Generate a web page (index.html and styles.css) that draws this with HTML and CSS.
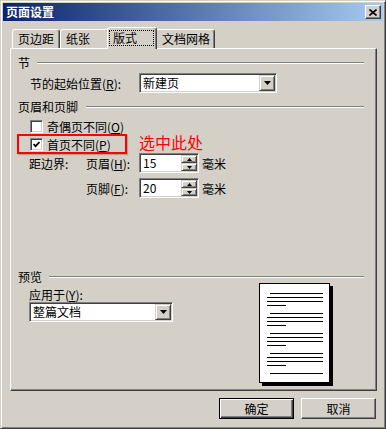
FILE: index.html
```html
<!DOCTYPE html>
<html lang="zh-CN">
<head>
<meta charset="utf-8">
<title>页面设置</title>
<link rel="stylesheet" href="styles.css">
</head>
<body>
<div class="window">
  <div class="titlebar">
    <span class="title">页面设置</span>
    <span class="close"><svg width="8" height="7" viewBox="0 0 8 7"><path d="M0.5 0.5 L7.5 6.5 M7.5 0.5 L0.5 6.5" stroke="#000" stroke-width="1.6" fill="none"/></svg></span>
  </div>
  <div class="tabs">
    <div class="tab t1">页边距</div>
    <div class="tab t2">纸张</div>
    <div class="tab active"><span class="focus">版式</span></div>
    <div class="tab t4">文档网格</div>
  </div>
  <div class="panel">
    <div class="group g1"><span>节</span><i class="rule"></i></div>
    <div class="row start">
      <span class="lbl">节的起始位置(<u>R</u>):</span>
      <div class="combo c1"><span class="val">新建页</span><span class="dd"><svg width="7" height="4" viewBox="0 0 7 4"><polygon points="0,0 7,0 3.5,4" fill="#000"/></svg></span></div>
    </div>
    <div class="group g2"><span>页眉和页脚</span><i class="rule"></i></div>
    <div class="row chk1"><span class="cb"></span><span>奇偶页不同(<u>O</u>)</span></div>
    <div class="row chk2">
      <div class="mark"><span class="cb"><svg width="7" height="7" viewBox="0 0 7 7"><polyline points="0.5,3 2.6,5.2 6.5,1" stroke="#000" stroke-width="1.7" fill="none"/></svg></span><span>首页不同(<u>P</u>)</span></div>
      <span class="note">选中此处</span>
    </div>
    <div class="row spinrow s1">
      <span class="l1">距边界:</span>
      <span class="l2">页眉(<u>H</u>):</span>
      <div class="spin"><span class="val">15</span><span class="btns"><span class="sb"><svg width="5" height="3" viewBox="0 0 5 3"><polygon points="2.5,0 5,3 0,3" fill="#000"/></svg></span><span class="sb"><svg width="5" height="3" viewBox="0 0 5 3"><polygon points="0,0 5,0 2.5,3" fill="#000"/></svg></span></span></div>
      <span class="unit">毫米</span>
    </div>
    <div class="row spinrow s2">
      <span class="l1"></span>
      <span class="l2">页脚(<u>F</u>):</span>
      <div class="spin"><span class="val">20</span><span class="btns"><span class="sb"><svg width="5" height="3" viewBox="0 0 5 3"><polygon points="2.5,0 5,3 0,3" fill="#000"/></svg></span><span class="sb"><svg width="5" height="3" viewBox="0 0 5 3"><polygon points="0,0 5,0 2.5,3" fill="#000"/></svg></span></span></div>
      <span class="unit">毫米</span>
    </div>
    <div class="group g3"><span>预览</span><i class="rule"></i></div>
    <div class="preview">
      <div class="apply">
        <span class="alabel">应用于(<u>Y</u>):</span>
        <div class="combo c2"><span class="val">整篇文档</span><span class="dd"><svg width="7" height="4" viewBox="0 0 7 4"><polygon points="0,0 7,0 3.5,4" fill="#000"/></svg></span></div>
      </div>
      <div class="paper">
        <i class="ln ind first"></i><i class="ln"></i><i class="ln"></i><i class="ln short"></i>
        <i class="ln ind gap"></i><i class="ln"></i><i class="ln"></i><i class="ln short"></i>
        <i class="ln ind gap"></i><i class="ln"></i><i class="ln"></i><i class="ln short"></i>
        <i class="ln ind gap"></i><i class="ln"></i><i class="ln"></i><i class="ln short"></i>
        <i class="ln ind gap"></i>
      </div>
    </div>
  </div>
  <div class="buttons">
    <button class="btn default">确定</button>
    <button class="btn">取消</button>
  </div>
</div>
</body>
</html>
```

FILE: styles.css
```css
body {
  margin: 0;
  background: #d4d0c8;
  font: 12px "Noto Sans CJK SC", "Noto Sans", sans-serif;
  color: #000;
}
u { text-decoration: underline; }

.window {
  width: 386px;
  height: 429px;
  box-sizing: border-box;
  border: 1px solid;
  border-color: #d4d0c8 #404040 #404040 #d4d0c8;
  box-shadow: inset 1px 1px #fff, inset -1px -1px #808080;
  padding: 2px;
  display: flex;
  flex-direction: column;
  background: #d4d0c8;
}

.titlebar {
  flex: none;
  height: 18px;
  display: flex;
  align-items: center;
  justify-content: space-between;
  padding: 0 2px 0 3px;
  background: linear-gradient(to right, #0a246a, #a6caf0);
  color: #fff;
  font-weight: 700;
}
.title { line-height: 18px; }
.close {
  width: 16px;
  height: 14px;
  box-sizing: border-box;
  background: #d4d0c8;
  border: 1px solid;
  border-color: #fff #404040 #404040 #fff;
  box-shadow: inset -1px -1px #808080;
  display: flex;
  align-items: center;
  justify-content: center;
}

.tabs {
  flex: none;
  display: flex;
  align-items: flex-end;
  height: 21px;
  margin-top: 6px;
  padding-left: 9px;
  position: relative;
  z-index: 1;
}
.tab {
  height: 19px;
  box-sizing: border-box;
  border: 1px solid;
  border-bottom: none;
  border-color: #fff #404040 transparent #fff;
  border-radius: 3px 3px 0 0;
  box-shadow: inset -1px 0 #808080;
  background: #d4d0c8;
  display: flex;
  align-items: center;
  padding-left: 5px;
  line-height: 14px;
}
.t1 { width: 48px; }
.t2 { width: 49px; }
.t4 { width: 60px; padding-left: 6px; }
.tab.active {
  width: 50px;
  height: 22px;
  margin: 0 -2px -1px;
  padding-left: 1px;
  align-items: flex-start;
  position: relative;
  z-index: 2;
}
.focus {
  margin-top: 2px;
  width: 45px;
  height: 16px;
  box-sizing: border-box;
  outline: 1px dotted #000;
  outline-offset: -1px;
  display: flex;
  align-items: center;
  padding-left: 4px;
}

.panel {
  flex: none;
  margin-left: 7px;
  width: 367px;
  height: 343px;
  box-sizing: border-box;
  border: 1px solid;
  border-color: #fff #404040 #404040 #fff;
  box-shadow: inset -1px -1px #808080;
  display: flex;
  flex-direction: column;
  padding: 0 12px 0 7px;
}

.group {
  display: flex;
  align-items: center;
  height: 14px;
  line-height: 14px;
  gap: 7px;
}
.rule {
  flex: 1;
  height: 0;
  border-top: 1px solid #808080;
  border-bottom: 1px solid #fff;
}
.g1 { margin-top: 7px; }
.g2 { margin-top: 7px; gap: 8px; }
.g3 { margin-top: 72px; }

.row {
  display: flex;
  align-items: center;
}
.start { margin-top: 3px; padding-left: 12px; height: 20px; }
.lbl { width: 109px; }

.combo {
  display: flex;
  align-items: center;
  height: 20px;
  box-sizing: border-box;
  border: 1px solid;
  border-color: #808080 #fff #fff #808080;
  box-shadow: inset 1px 1px #404040, inset -1px -1px #d4d0c8;
  background: #fff;
  padding: 1px;
}
.c1 { width: 138px; }
.c2 { width: 144px; }
.val { padding-left: 2px; line-height: 16px; }
.dd {
  width: 16px;
  height: 16px;
  box-sizing: border-box;
  margin-left: auto;
  background: #d4d0c8;
  border: 1px solid;
  border-color: #d4d0c8 #404040 #404040 #d4d0c8;
  box-shadow: inset 1px 1px #fff, inset -1px -1px #808080;
  display: flex;
  align-items: center;
  justify-content: center;
}

.cb {
  flex: none;
  width: 13px;
  height: 13px;
  box-sizing: border-box;
  border: 1px solid;
  border-color: #808080 #fff #fff #808080;
  box-shadow: inset 1px 1px #404040, inset -1px -1px #d4d0c8;
  background: #fff;
  display: flex;
  align-items: center;
  justify-content: center;
}
.chk1 { margin-top: 6px; height: 13px; padding-left: 12px; gap: 4px; }
.chk2 { margin-top: 1px; align-items: flex-start; }
.mark {
  display: flex;
  align-items: center;
  gap: 4px;
  width: 110px;
  height: 20px;
  box-sizing: border-box;
  border: 2px solid #f00;
  box-shadow: 1px 1px 1px rgba(120, 0, 0, 0.25);
  padding-left: 11px;
  margin-left: -1px;
}
.note {
  color: #f00;
  font-size: 16px;
  line-height: 16px;
  margin-left: 12px;
  margin-top: 0;
}

.spinrow { padding-left: 11px; height: 20px; }
.s1 { margin-top: -1px; }
.s2 { margin-top: 5px; }
.l1 { width: 57px; }
.l2 { width: 53px; }
.spin {
  display: flex;
  align-items: center;
  width: 60px;
  height: 20px;
  box-sizing: border-box;
  border: 1px solid;
  border-color: #808080 #fff #fff #808080;
  box-shadow: inset 1px 1px #404040, inset -1px -1px #d4d0c8;
  background: #fff;
  padding: 1px;
}
.btns {
  margin-left: auto;
  display: flex;
  flex-direction: column;
  width: 16px;
  height: 16px;
}
.sb {
  height: 8px;
  box-sizing: border-box;
  background: #d4d0c8;
  border: 1px solid;
  border-color: #d4d0c8 #404040 #404040 #d4d0c8;
  box-shadow: inset 1px 1px #fff, inset -1px -1px #808080;
  display: flex;
  align-items: center;
  justify-content: center;
}
.unit { margin-left: 3px; }

.preview {
  display: flex;
  margin-top: -1px;
  padding-left: 11px;
}
.apply {
  display: flex;
  flex-direction: column;
  align-items: flex-start;
}
.alabel { margin-top: 6px; line-height: 12px; }
.apply .combo { margin-top: 1px; }

.paper {
  width: 71px;
  height: 100px;
  box-sizing: border-box;
  border: 1px solid #000;
  background: #fff;
  box-shadow: 3px 3px 0 #000;
  margin-left: 86px;
  padding: 9px 0 0 7px;
  display: flex;
  flex-direction: column;
  align-items: flex-start;
}
.ln {
  display: block;
  width: 56px;
  height: 1px;
  background: #000;
  margin-top: 3px;
}
.ln.first { margin-top: 0; }
.ln.ind { width: 53px; margin-left: 3px; }
.ln.gap { margin-top: 7px; }
.ln.short { width: 19px; }

.buttons {
  flex: none;
  display: flex;
  justify-content: flex-end;
  gap: 7px;
  margin-top: 7px;
  padding-right: 7px;
}
.btn {
  width: 75px;
  height: 21px;
  box-sizing: border-box;
  font: inherit;
  color: #000;
  background: #d4d0c8;
  border: 1px solid;
  border-color: #fff #404040 #404040 #fff;
  box-shadow: inset -1px -1px #808080;
  padding: 0;
}
.btn.default {
  border-color: #000;
  box-shadow: inset 1px 1px #fff, inset -1px -1px #404040, inset -2px -2px #808080;
}
```
